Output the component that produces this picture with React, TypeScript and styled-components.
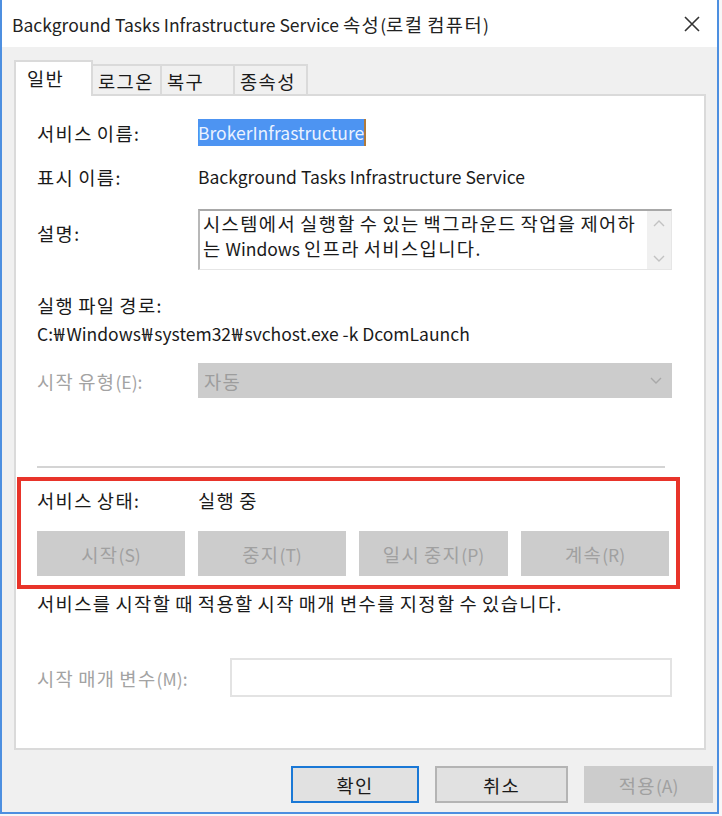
import React from "react";
import styled, { createGlobalStyle } from "styled-components";

const Global = createGlobalStyle`
  html, body { margin: 0; padding: 0; background: #f7f7f7; }
  body { font-family: "Noto Sans CJK KR", "Noto Sans", sans-serif; }
  * { box-sizing: border-box; }
`;

const Wide = styled.span`
  font-size: 1.07em;
  letter-spacing: 1.4px;
`;

const Won = styled.span`
  font-size: 1.07em;
  padding: 0 2px 0 1px;
`;

const HANGUL = /([\u3131-\u318E\uAC00-\uD7A3]+|\u20A9)/;

function K({ children }: { children: string }) {
  const parts = children.split(HANGUL);
  return (
    <span>
      {parts.map((part, i) =>
        i % 2 === 1 ? (
          part === "\u20A9" ? <Won key={i}>{part}</Won> : <Wide key={i}>{part}</Wide>
        ) : (
          <React.Fragment key={i}>{part}</React.Fragment>
        )
      )}
    </span>
  );
}

const Window = styled.div`
  width: 719px;
  height: 814px;
  border-left: 2px solid #4d8fe0;
  border-right: 2px solid #4d8fe0;
  border-bottom: 2px solid #4d8fe0;
  background: #f0f0f0;
  display: flex;
  flex-direction: column;
  color: #1a1a1a;
  font-size: 17.5px;
`;

const TitleBar = styled.div`
  height: 47px;
  background: #ffffff;
  display: flex;
  align-items: center;
  justify-content: space-between;
  padding: 0 16px 0 10px;
  flex-shrink: 0;
`;

const TitleText = styled.div`
  color: #222;
  white-space: nowrap;
`;

const CloseIcon = () => (
  <svg width="18" height="18" viewBox="0 0 18 18">
    <path d="M2 2 L16 16 M16 2 L2 16" stroke="#333" strokeWidth="1.6" />
  </svg>
);

const Body = styled.div`
  flex: 1;
  display: flex;
  flex-direction: column;
  padding: 13px 0 0 12px;
`;

const TabStrip = styled.div`
  display: flex;
  align-items: flex-end;
  height: 36px;
  position: relative;
  z-index: 1;
`;

const Tab = styled.div<{ $active?: boolean; $w: number }>`
  width: ${(p) => p.$w}px;
  height: ${(p) => (p.$active ? 36 : 32)}px;
  background: ${(p) => (p.$active ? "#ffffff" : "#f0f0f0")};
  border: 2px solid #dadada;
  border-bottom: ${(p) => (p.$active ? "none" : "2px solid #dadada")};
  ${(p) => (p.$active ? "" : "border-left: none;")}
  display: flex;
  align-items: center;
  padding-left: ${(p) => (p.$active ? 11 : 5)}px;
  padding-bottom: ${(p) => (p.$active ? 4 : 0)}px;
  color: #1a1a1a;
  white-space: nowrap;
`;

const Panel = styled.div`
  width: 692px;
  height: 656px;
  margin-top: -2px;
  background: #ffffff;
  border: 2px solid #dadada;
  padding: 24px 32px 0 21px;
  display: flex;
  flex-direction: column;
`;

const Row = styled.div<{ $h?: number; $mt?: number }>`
  display: flex;
  align-items: center;
  height: ${(p) => p.$h ?? 24}px;
  margin-top: ${(p) => p.$mt ?? 0}px;
  flex-shrink: 0;
`;

const Label = styled.div<{ $disabled?: boolean; $w?: number }>`
  width: ${(p) => p.$w ?? 161}px;
  flex-shrink: 0;
  color: ${(p) => (p.$disabled ? "#a3a3a3" : "#1a1a1a")};
  white-space: nowrap;
`;

const Value = styled.div`
  white-space: nowrap;
`;

const Selected = styled.span`
  background: #4d94f2;
  color: #eaf2ff;
  padding: 1px 0;
  border-right: 2px solid #b07a3a;
`;

const DescRow = styled.div`
  display: flex;
  margin-top: 21px;
  height: 61px;
  flex-shrink: 0;
`;

const DescLabel = styled(Label)`
  padding-top: 10px;
`;

const TextArea = styled.div`
  width: 475px;
  height: 61px;
  border-top: 2px solid #a8a8a8;
  border-left: 2px solid #b8b8b8;
  border-right: 1px solid #e6e6e6;
  border-bottom: 1px solid #e6e6e6;
  display: flex;
`;

const TextAreaText = styled.div`
  flex: 1;
  padding: 0 0 0 3px;
  line-height: 24px;
  white-space: nowrap;
`;

const ScrollBar = styled.div`
  width: 24px;
  background: #f0f0f0;
  display: flex;
  flex-direction: column;
  justify-content: space-between;
  align-items: center;
  padding: 8px 0 6px;
`;

const Chevron = ({ up }: { up?: boolean }) => (
  <svg width="12" height="8" viewBox="0 0 12 8">
    <path
      d={up ? "M1 7 L6 2 L11 7" : "M1 1 L6 6 L11 1"}
      stroke="#c2c2c2"
      strokeWidth="1.4"
      fill="none"
    />
  </svg>
);

const Combo = styled.div`
  width: 475px;
  height: 35px;
  background: #cccccc;
  display: flex;
  align-items: center;
  justify-content: space-between;
  padding: 0 10px 0 6px;
  color: #9d9d9d;
`;

const ComboChevron = () => (
  <svg width="12" height="8" viewBox="0 0 12 8">
    <path d="M1 1 L6 6 L11 1" stroke="#a8a8a8" strokeWidth="1.4" fill="none" />
  </svg>
);

const Separator = styled.div`
  height: 2px;
  width: 628px;
  background: #d4d4d4;
  margin-top: 68px;
  flex-shrink: 0;
`;

const StatusBox = styled.div`
  margin: 9px -8px 0 -20px;
  border: 4px solid #e8342a;
  padding: 6px 5px 9px 16px;
  display: flex;
  flex-direction: column;
  flex-shrink: 0;
`;

const ButtonRow = styled.div`
  display: flex;
  gap: 13px;
  margin-top: 20px;
`;

const GrayButton = styled.div<{ $w: number }>`
  width: ${(p) => p.$w}px;
  height: 45px;
  background: #cccccc;
  color: #a0a0a0;
  display: flex;
  align-items: center;
  justify-content: center;
  white-space: nowrap;
`;

const Hint = styled.div`
  margin-top: 1px;
  height: 24px;
  display: flex;
  align-items: center;
  white-space: nowrap;
  flex-shrink: 0;
`;

const ParamInput = styled.div`
  width: 442px;
  height: 39px;
  border: 2px solid #e3e3e3;
  background: #ffffff;
`;

const Footer = styled.div`
  display: flex;
  justify-content: flex-end;
  gap: 16px;
  padding: 16px 4px 0 0;
`;

const DialogButton = styled.div<{ $kind: "default" | "normal" | "disabled"; $w: number }>`
  width: ${(p) => p.$w}px;
  height: 37px;
  display: flex;
  align-items: center;
  justify-content: center;
  background: ${(p) => (p.$kind === "disabled" ? "#cccccc" : "#e1e1e1")};
  color: ${(p) => (p.$kind === "disabled" ? "#a0a0a0" : "#1a1a1a")};
  border: ${(p) =>
    p.$kind === "default"
      ? "2px solid #1a78d6"
      : p.$kind === "normal"
      ? "2px solid #b4b4b4"
      : "none"};
`;

export default function App() {
  return (
    <>
      <Global />
      <Window>
        <TitleBar>
          <TitleText>
            <K>Background Tasks Infrastructure Service 속성(로컬 컴퓨터)</K>
          </TitleText>
          <CloseIcon />
        </TitleBar>
        <Body>
          <TabStrip>
            <Tab $active $w={79}><K>일반</K></Tab>
            <Tab $w={69}><K>로그온</K></Tab>
            <Tab $w={73}><K>복구</K></Tab>
            <Tab $w={73}><K>종속성</K></Tab>
          </TabStrip>
          <Panel>
            <Row>
              <Label><K>서비스 이름:</K></Label>
              <Value>
                <Selected>BrokerInfrastructure</Selected>
              </Value>
            </Row>
            <Row $mt={20}>
              <Label><K>표시 이름:</K></Label>
              <Value>Background Tasks Infrastructure Service</Value>
            </Row>
            <DescRow>
              <DescLabel><K>설명:</K></DescLabel>
              <TextArea>
                <TextAreaText>
                  <K>시스템에서 실행할 수 있는 백그라운드 작업을 제어하</K>
                  <br />
                  <K>는 Windows 인프라 서비스입니다.</K>
                </TextAreaText>
                <ScrollBar>
                  <Chevron up />
                  <Chevron />
                </ScrollBar>
              </TextArea>
            </DescRow>
            <Row $mt={22}>
              <Label $w={400}><K>실행 파일 경로:</K></Label>
            </Row>
            <Row $mt={4}>
              <Value><K>C:₩Windows₩system32₩svchost.exe -k DcomLaunch</K></Value>
            </Row>
            <Row $h={35} $mt={19}>
              <Label $disabled><K>시작 유형(E):</K></Label>
              <Combo>
                <K>자동</K>
                <ComboChevron />
              </Combo>
            </Row>
            <Separator />
            <StatusBox>
              <Row>
                <Label><K>서비스 상태:</K></Label>
                <Value><K>실행 중</K></Value>
              </Row>
              <ButtonRow>
                <GrayButton $w={148}><K>시작(S)</K></GrayButton>
                <GrayButton $w={148}><K>중지(T)</K></GrayButton>
                <GrayButton $w={149}><K>일시 중지(P)</K></GrayButton>
                <GrayButton $w={148}><K>계속(R)</K></GrayButton>
              </ButtonRow>
            </StatusBox>
            <Hint><K>서비스를 시작할 때 적용할 시작 매개 변수를 지정할 수 있습니다.</K></Hint>
            <Row $h={39} $mt={44}>
              <Label $disabled $w={193}><K>시작 매개 변수(M):</K></Label>
              <ParamInput />
            </Row>
          </Panel>
          <Footer>
            <DialogButton $kind="default" $w={128}><K>확인</K></DialogButton>
            <DialogButton $kind="normal" $w={133}><K>취소</K></DialogButton>
            <DialogButton $kind="disabled" $w={129}><K>적용(A)</K></DialogButton>
          </Footer>
        </Body>
      </Window>
    </>
  );
}
